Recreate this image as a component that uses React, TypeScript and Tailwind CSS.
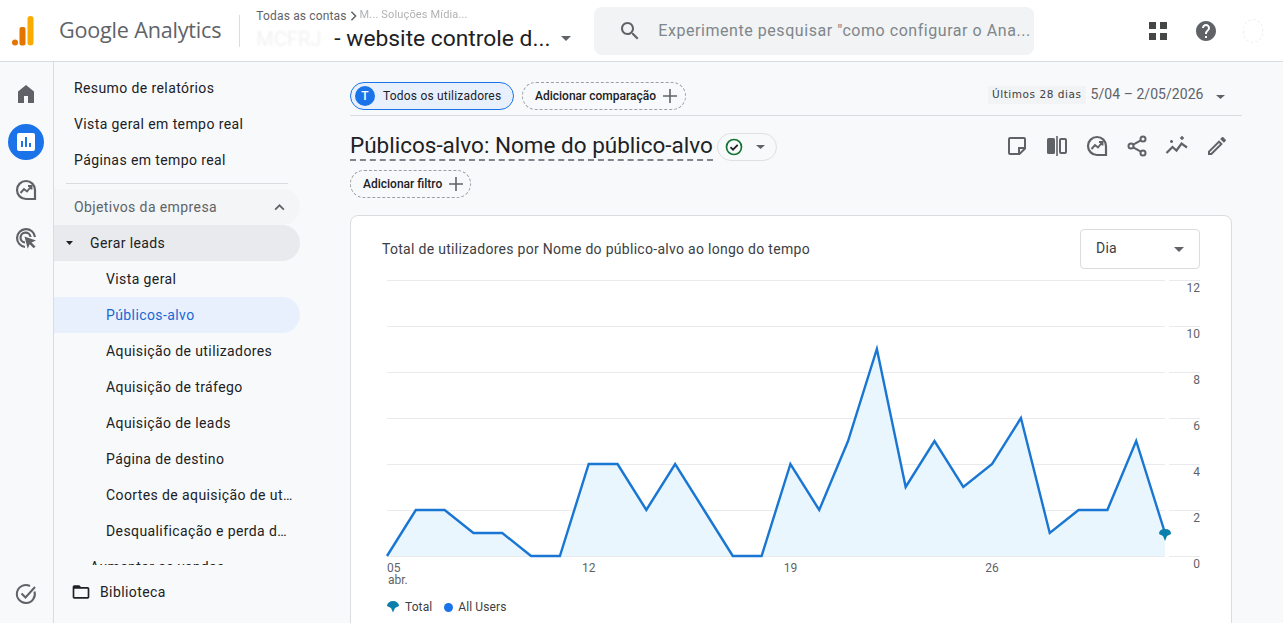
import React from "react";

// Daily values for the 28 day chart
const series = [0, 2, 2, 1, 1, 0, 0, 4, 4, 2, 4, 2, 0, 0, 4, 2, 5, 9, 3, 5, 3, 4, 6, 1, 2, 2, 5, 1];

const subItems = [
  "Vista geral",
  "Públicos-alvo",
  "Aquisição de utilizadores",
  "Aquisição de tráfego",
  "Aquisição de leads",
  "Página de destino",
  "Coortes de aquisição de utilizadores",
  "Desqualificação e perda de leads",
];

const Caret = ({ className = "" }: { className?: string }) => (
  <svg viewBox="0 0 10 5" preserveAspectRatio="none" className={className} fill="currentColor">
    <path d="M0 0h10L5 5z" />
  </svg>
);

const Plus = () => (
  <svg viewBox="0 0 16 16" className="h-4 w-4 text-[#5f6368]" fill="none" stroke="currentColor" strokeWidth="1.6">
    <path d="M8 1v14M1 8h14" />
  </svg>
);

const InsightsIcon = () => (
  <svg viewBox="0 0 24 24" className="h-6 w-6" fill="none" stroke="#5f6368" strokeWidth="2.2">
    <path d="M21 12a9 9 0 1 0-9 9h9z" />
    <path d="M6.500 15l3.500-4 3 2.500 4-5M14 8h3.500v3.500" strokeWidth="1.900" />
  </svg>
);

const AdsIcon = () => (
  <svg viewBox="0 0 24 24" className="h-6 w-6" fill="none" stroke="#5f6368" strokeWidth="2.2">
    <path d="M11 21a9 9 0 1 1 10-10" />
    <path d="M11 16.500a5 5 0 1 1 5.500-5.500" />
    <path d="M10.500 10.500l11.500 4-4.500 2 4 4-1.800 1.800-4-4-2 4.500z" fill="#5f6368" stroke="none" />
  </svg>
);

function Chart() {
  const x = (i: number) => 5 + i * 28.815;
  const y = (v: number) => 276 - v * 23;
  const line = series.map((v, i) => `${x(i)},${y(v)}`).join(" ");
  const area = `${x(0)},276 ${line} ${x(27)},276`;
  const mx = x(27);
  return (
    <svg width="818" height="312" viewBox="0 0 818 312" className="block" style={{ fontFamily: "Roboto, sans-serif" }}>
      {[0, 2, 4, 6, 8, 10, 12].map((v) => (
        <g key={v}>
          <path d={`M5 ${y(v) + 0.5}H783M787 ${y(v) + 0.5}H818`} stroke="#e8eaed" />
          <text x="818" y={y(v) + 12} textAnchor="end" fontSize="12" fill="#5f6368">
            {v}
          </text>
        </g>
      ))}
      <polygon points={area} fill="#e8f5fd" fillOpacity="0.95" />
      <polyline points={line} fill="none" stroke="#1976d2" strokeWidth="2.400" strokeLinejoin="miter" />
      {[
        { i: 0, t: "05" },
        { i: 7, t: "12" },
        { i: 14, t: "19" },
        { i: 21, t: "26" },
      ].map((tick) => (
        <text key={tick.t} x={x(tick.i)} y="292" fontSize="12" fill="#5f6368" textAnchor={tick.i === 0 ? "start" : "middle"}>
          {tick.t}
        </text>
      ))}
      <text x="6" y="304" fontSize="12" fill="#5f6368">
        abr.
      </text>
      <path
        d={`M${mx - 6} 254Q${mx - 6} 249 ${mx} 249Q${mx + 6} 249 ${mx + 6} 254L${mx + 2} 256L${mx} 261L${mx - 2} 256Z`}
        fill="#0b7fab"
      />
    </svg>
  );
}

export default function App() {
  return (
    <div
      className="flex h-[623px] w-[1283px] flex-col overflow-hidden bg-[#f8f9fb] text-[#202124]"
      style={{ fontFamily: "Roboto, sans-serif" }}
    >
      {/* top bar */}
      <header className="flex h-[62px] shrink-0 items-center border-b border-[#dadce0] bg-white">
        <svg viewBox="0 0 22 30" className="ml-[12px] h-[30px] w-[22px]">
          <circle cx="3" cy="26.500" r="3" fill="#e37400" />
          <rect x="7.500" y="11" width="6" height="18.500" rx="2" fill="#e37400" />
          <rect x="15.500" y="0" width="6" height="29.500" rx="3" fill="#f9ab00" />
        </svg>
        <span className="ml-[25px] text-[#5f6368] tracking-[-0.2px]" style={{ fontFamily: "'Open Sans', sans-serif", fontSize: 21.6 }}>
          Google Analytics
        </span>
        <div className="ml-[18px] h-[32px] w-px bg-[#dadce0]" />
        <div className="ml-[16px] flex w-[324px] flex-col">
          <div className="flex h-[16px] items-center text-[12px] tracking-[0.15px] text-[#5f6368]">
            Todas as contas
            <svg viewBox="0 0 8 12" className="mx-[3px] h-[10px] w-[7px]" fill="none" stroke="#5f6368" strokeWidth="1.800">
              <path d="M1.500 1l5 5-5 5" />
            </svg>
            <span className="text-[11px] opacity-50 blur-[0.5px]">M... Soluções Mídia...</span>
          </div>
          <div className="flex h-[30px] items-center">
            <span className="w-[78px] truncate text-[20px] leading-[30px] text-[#202124] opacity-[0.06] blur-[1px]">MCFRJ</span>
            <span className="text-[22.8px] leading-[30px]">- website controle d...</span>
            <Caret className="ml-[10px] h-[5px] w-[10px] text-[#5f6368]" />
          </div>
        </div>
        <div className="ml-[14px] flex h-[48px] w-[440px] items-center rounded-lg bg-[#f1f3f4] pl-[24px]">
          <svg viewBox="0 0 24 24" className="h-6 w-6" fill="#5f6368">
            <path d="M15.500 14h-.79l-.28-.27C15.410 12.590 16 11.110 16 9.500 16 5.910 13.090 3 9.500 3S3 5.910 3 9.500 5.910 16 9.500 16c1.610 0 3.090-.59 4.230-1.570l.27.28v.79l5 4.990L20.490 19l-4.990-5zm-6 0C7.010 14 5 11.990 5 9.500S7.010 5 9.500 5 14 7.010 14 9.500 11.990 14 9.500 14z" />
          </svg>
          <span className="ml-[16px] whitespace-nowrap text-[16px] tracking-[0.55px] text-[#80868b]">
            Experimente pesquisar "como configurar o Ana...
          </span>
        </div>
        <svg viewBox="0 0 18 18" className="ml-[115px] h-[18px] w-[18px]" fill="#444746">
          <path d="M0 0h7v7H0zM11 0h7v7h-7zM0 11h7v7H0zM11 11h7v7h-7z" />
        </svg>
        <svg viewBox="0 0 24 24" className="ml-[27px] h-6 w-6" fill="#5f6368">
          <path d="M12 2C6.480 2 2 6.480 2 12s4.480 10 10 10 10-4.480 10-10S17.520 2 12 2zm1 17h-2v-2h2v2zm2.070-7.750l-.9.920C13.450 12.900 13 13.500 13 15h-2v-.5c0-1.100.45-2.100 1.170-2.830l1.240-1.260c.37-.36.59-.86.59-1.410 0-1.100-.9-2-2-2s-2 .9-2 2H8c0-2.210 1.790-4 4-4s4 1.790 4 4c0 .88-.36 1.680-.93 2.250z" />
        </svg>
        <div className="ml-[25px] h-[24px] w-[20px] rounded-full border border-dashed border-[#eeeeee]" />
      </header>

      <div className="flex min-h-0 flex-1">
        {/* icon rail */}
        <aside className="flex w-[54px] shrink-0 flex-col items-center border-r border-[#dadce0] pr-[1px] pt-[8px]">
          <div className="flex h-12 items-center justify-center">
            <svg viewBox="0 0 24 24" className="h-6 w-6" fill="#5f6368">
              <path d="M4 21V9.500L12 3l8 6.500V21h-6v-7h-4v7z" />
            </svg>
          </div>
          <div className="flex h-12 items-center justify-center">
            <div className="flex h-9 w-9 items-center justify-center rounded-full bg-[#1a73e8]">
              <svg viewBox="0 0 18 18" className="h-[18px] w-[18px]">
                <rect width="18" height="18" rx="2" fill="#fff" />
                <path d="M4 8h2v6H4zM8 4h2v10H8zM12 10h2v4h-2z" fill="#1a73e8" />
              </svg>
            </div>
          </div>
          <div className="flex h-12 items-center justify-center">
            <InsightsIcon />
          </div>
          <div className="flex h-12 items-center justify-center">
            <AdsIcon />
          </div>
          <div className="mt-auto flex h-[58px] items-center justify-center">
            <svg viewBox="0 0 24 24" className="h-6 w-6" fill="none" stroke="#5f6368" strokeWidth="2">
              <path d="M20.500 9.500A9 9 0 1 1 16 4" />
              <path d="M7.500 11.500l4 4L21 5" />
            </svg>
          </div>
        </aside>

        {/* report navigation */}
        <nav className="flex w-[256px] shrink-0 flex-col text-[14px] tracking-[0.4px]">
          <div className="h-[503px] shrink-0 overflow-hidden pt-[8px]">
            {["Resumo de relatórios", "Vista geral em tempo real", "Páginas em tempo real"].map((item) => (
              <div key={item} className="flex h-9 items-center pl-[20px]">
                {item}
              </div>
            ))}
            <div className="ml-[12px] mt-[5px] h-px w-[222px] bg-[#dadce0]" />
            <div className="mt-[5px] flex h-9 w-[246px] items-center justify-between rounded-r-full bg-[#f1f3f4]/70 pl-[20px] pr-[15px] text-[#5f6368]">
              Objetivos da empresa
              <svg viewBox="0 0 12 8" className="h-[7px] w-[11px]" fill="none" stroke="#5f6368" strokeWidth="2">
                <path d="M1 6.500l5-5 5 5" />
              </svg>
            </div>
            <div className="flex h-9 w-[246px] items-center rounded-r-full bg-[#e8eaed]">
              <Caret className="ml-[12px] h-[4px] w-[7px] text-[#202124]" />
              <span className="ml-[17px]">Gerar leads</span>
            </div>
            {subItems.map((item, i) => (
              <div
                key={item}
                className={`flex h-9 w-[246px] items-center rounded-r-full pl-[52px] pr-[6px] ${
                  i === 1 ? "bg-[#e8f0fe] text-[#1967d2]" : ""
                }`}
              >
                <span className="truncate">{item}</span>
              </div>
            ))}
            <div className="flex h-9 w-[246px] items-center">
              <Caret className="ml-[12px] h-[4px] w-[7px] text-[#202124]" />
              <span className="ml-[17px]">Aumentar as vendas</span>
            </div>
          </div>
          <div className="flex flex-1 items-center pl-[17px] pb-[4px]">
            <svg viewBox="0 0 24 24" className="h-5 w-5" fill="#202124">
              <path d="M20 6h-8l-2-2H4c-1.100 0-2 .9-2 2v12c0 1.100.9 2 2 2h16c1.100 0 2-.9 2-2V8c0-1.100-.9-2-2-2zm0 12H4V8h16v10z" />
            </svg>
            <span className="ml-[9px]">Biblioteca</span>
          </div>
        </nav>

        {/* report body */}
        <main className="min-w-0 flex-1 overflow-hidden pl-[40px]">
          <div className="w-[892px]">
            <div className="flex h-[54px] items-end border-b border-[#dadce0] pb-[5px]">
              <div className="flex h-[28px] w-[164px] items-center rounded-full border border-[#1a73e8] bg-[#e8f0fe] pl-[4px] text-[12px] tracking-[0.2px]">
                <span className="flex h-[20px] w-[20px] items-center justify-center rounded-full bg-[#1a73e8] text-[12px] font-medium text-white">
                  T
                </span>
                <span className="ml-[8px]">Todos os utilizadores</span>
              </div>
              <div className="ml-[8px] flex h-[28px] w-[164px] items-center justify-between rounded-full border border-dashed border-[#9aa0a6] pl-[12px] pr-[7px] text-[12px] font-medium">
                Adicionar comparação
                <Plus />
              </div>
              <span
                className="mb-[6px] ml-[302px] bg-[#f1f3f4] px-[4px] py-[1px] tracking-[0.55px] text-[#3c4043]"
                style={{ fontFamily: "'DejaVu Sans', sans-serif", fontSize: 10.5 }}
              >
                Últimos 28 dias
              </span>
              <span className="mb-[5px] ml-[5px] text-[14px] tracking-[0.05px] text-[#5f6368]">5/04 – 2/05/2026</span>
              <Caret className="mb-[11px] ml-[12px] h-[4px] w-[9px] text-[#5f6368]" />
            </div>

            <div className="mt-[13px] flex h-[36px] items-center pr-[13px]">
              <h1 className="mt-[-1px] h-[33px] self-start border-b-2 border-dashed border-[#80868b] text-[22.5px] font-normal leading-[35px]">
                Públicos-alvo: Nome do público-alvo
              </h1>
              <div className="ml-[4px] flex h-[28px] w-[60px] items-center rounded-full border border-[#e0e0e0] pl-[7px]">
                <svg viewBox="0 0 18 18" className="h-[18px] w-[18px]" fill="none" stroke="#137333" strokeWidth="1.700">
                  <circle cx="9" cy="9" r="7.500" />
                  <path d="M5.500 9.200l2.500 2.500 4.700-4.900" stroke="#202124" />
                </svg>
                <Caret className="ml-[13px] h-[4px] w-[9px] text-[#5f6368]" />
              </div>
              <div className="ml-auto mt-[-3px] flex items-center gap-[16px]">
                <svg viewBox="0 0 24 24" className="h-6 w-6" fill="none" stroke="#5f6368" strokeWidth="2">
                  <path d="M4 5a1 1 0 0 1 1-1h14a1 1 0 0 1 1 1v9.500L14.500 20H5a1 1 0 0 1-1-1z" />
                  <path d="M14 20v-6h6" />
                </svg>
                <svg viewBox="0 0 24 24" className="h-6 w-6" fill="#5f6368">
                  <rect x="2" y="4" width="8" height="16" rx="1.500" />
                  <rect x="11.200" y="2" width="1.600" height="20" />
                  <rect x="15" y="5" width="6" height="14" rx="1" fill="none" stroke="#5f6368" strokeWidth="2" />
                </svg>
                <InsightsIcon />
                <svg viewBox="0 0 24 24" className="h-6 w-6" fill="none" stroke="#5f6368" strokeWidth="2">
                  <circle cx="18" cy="5" r="2.500" />
                  <circle cx="6" cy="12" r="2.500" />
                  <circle cx="18" cy="19" r="2.500" />
                  <path d="M8.200 10.700l7.600-4.400M8.200 13.300l7.600 4.400" />
                </svg>
                <svg viewBox="0 0 24 24" className="h-6 w-6" fill="none" stroke="#5f6368" strokeWidth="2.200">
                  <path d="M1.500 19l6-6 4 3.500 5-7 5.500 4" />
                  <path d="M5 7.500h3M6.500 6v3M15 4h4M17 2v4" strokeWidth="1.500" />
                </svg>
                <svg viewBox="0 0 24 24" className="h-6 w-6" fill="#5f6368">
                  <path d="M14.060 9.020l.92.92L5.920 19H5v-.92l9.060-9.060M17.660 3c-.25 0-.51.100-.7.290l-1.830 1.830 3.750 3.750 1.830-1.830c.39-.39.39-1.020 0-1.410l-2.340-2.340c-.2-.2-.45-.29-.71-.29zm-3.600 3.190L3 17.250V21h3.750L17.810 9.940l-3.750-3.750z" />
                </svg>
              </div>
            </div>

            <div className="mt-[5px] flex h-[28px] w-[121px] items-center justify-between rounded-full border border-dashed border-[#9aa0a6] pl-[12px] pr-[6px] text-[12px] font-medium">
              Adicionar filtro
              <Plus />
            </div>

            {/* chart card */}
            <section className="mt-[17px] w-[882px] rounded-t-lg border border-[#dadce0] bg-white pb-[40px] pl-[31px] pr-[31px] pt-[13px]">
              <div className="flex h-[40px] items-center justify-between">
                <h2 className="text-[14px] font-normal tracking-[0.29px] text-[#3c4043]">
                  Total de utilizadores por Nome do público-alvo ao longo do tempo
                </h2>
                <div className="flex h-[40px] w-[120px] items-center justify-between rounded border border-[#dadce0] pb-[2px] pl-[15px] pr-[15px] text-[14px] tracking-[0.2px] text-[#3c4043]">
                  Dia
                  <Caret className="mt-[2px] h-[5px] w-[10px] text-[#5f6368]" />
                </div>
              </div>
              <div className="mt-[11px]">
                <Chart />
              </div>
              <div className="mt-[6px] flex items-center pl-[4px] text-[12px] tracking-[0.1px] text-[#3c4043]">
                <svg viewBox="0 0 14 12" className="h-[12px] w-[14px]" fill="#0b7fab">
                  <path d="M1 5a6 5 0 0 1 12 0l-4 2-2 4.500-2-4.500z" />
                </svg>
                <span className="ml-[5px]">Total</span>
                <span className="ml-[12px] h-[9px] w-[9px] rounded-full bg-[#1a73e8]" />
                <span className="ml-[5px]">All Users</span>
              </div>
            </section>
          </div>
        </main>
      </div>
    </div>
  );
}
